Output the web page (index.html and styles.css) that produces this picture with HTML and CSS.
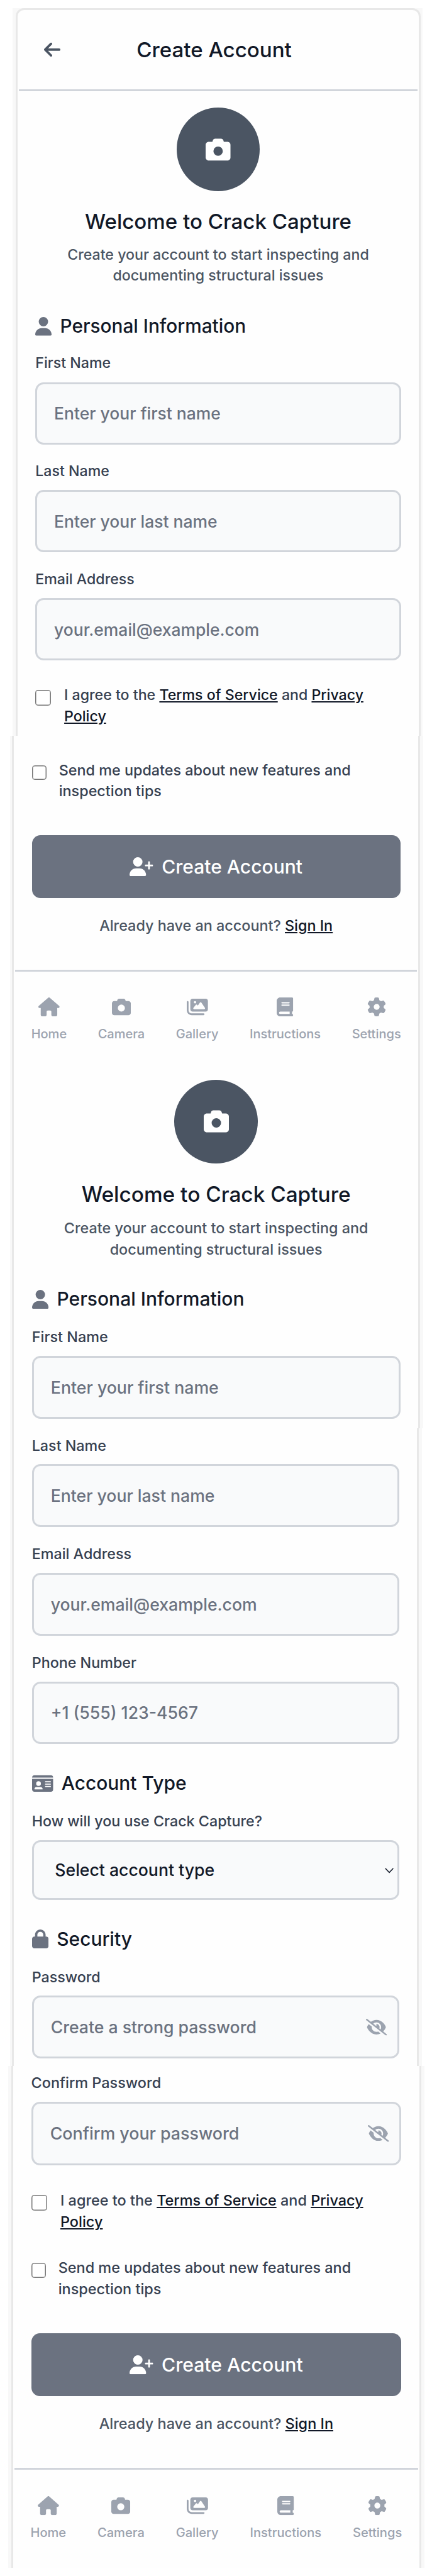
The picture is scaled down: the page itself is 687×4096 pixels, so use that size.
FILE: index.html
```html
<!DOCTYPE html>
<html lang="en">
<head>
<meta charset="utf-8">
<title>Create Account</title>
<link rel="stylesheet" href="styles.css">
</head>
<body>
<svg class="sprite" aria-hidden="true">
  <symbol id="arrow" viewBox="0 0 448 512"><path d="M9.4 233.4c-12.5 12.5-12.5 32.8 0 45.3l160 160c12.5 12.5 32.8 12.5 45.3 0s12.5-32.8 0-45.3L109.2 288 416 288c17.7 0 32-14.3 32-32s-14.3-32-32-32l-306.7 0L214.6 118.6c12.5-12.5 12.5-32.8 0-45.3s-32.8-12.5-45.3 0l-160 160z"/></symbol>
  <symbol id="camera" viewBox="0 0 512 512"><path d="M149.1 64.8L138.7 96H64C28.7 96 0 124.7 0 160V416c0 35.3 28.7 64 64 64H448c35.3 0 64-28.7 64-64V160c0-35.3-28.7-64-64-64H373.3L362.9 64.8C356.4 45.2 338.1 32 317.4 32H194.6c-20.7 0-39 13.2-45.5 32.8zM256 192a96 96 0 1 1 0 192 96 96 0 1 1 0-192z"/></symbol>
  <symbol id="user" viewBox="0 0 448 512"><path d="M224 256A128 128 0 1 0 224 0a128 128 0 1 0 0 256zm-45.7 48C79.8 304 0 383.8 0 482.3C0 498.7 13.3 512 29.7 512H418.3c16.4 0 29.7-13.3 29.7-29.7C448 383.8 368.2 304 269.7 304H178.3z"/></symbol>
  <symbol id="user-plus" viewBox="0 0 640 512"><path d="M96 128a128 128 0 1 1 256 0A128 128 0 1 1 96 128zM0 482.3C0 383.8 79.8 304 178.3 304h91.4C368.2 304 448 383.8 448 482.3c0 16.4-13.3 29.7-29.7 29.7H29.7C13.3 512 0 498.7 0 482.3zM504 312V248H440c-13.3 0-24-10.7-24-24s10.7-24 24-24h64V136c0-13.3 10.7-24 24-24s24 10.7 24 24v64h64c13.3 0 24 10.7 24 24s-10.7 24-24 24H552v64c0 13.3-10.7 24-24 24s-24-10.7-24-24z"/></symbol>
  <symbol id="home" viewBox="0 0 576 512"><path d="M575.8 255.5c0 18-15 32.1-32 32.1h-32l.7 160.2c0 2.7-.2 5.4-.5 8.1V472c0 22.1-17.9 40-40 40H456c-1.1 0-2.2 0-3.3-.1c-1.4 .1-2.8 .1-4.2 .1H416 392c-22.1 0-40-17.9-40-40V448 384c0-17.7-14.3-32-32-32H256c-17.7 0-32 14.3-32 32v64 24c0 22.1-17.9 40-40 40H160 128.1c-1.5 0-3-.1-4.5-.2c-1.2 .1-2.4 .2-3.6 .2H104c-22.1 0-40-17.9-40-40V360c0-.9 0-1.9 .1-2.8V287.6H32c-18 0-32-14-32-32.1c0-9 3-17 10-24L266.4 8c7-7 15-8 22-8s15 2 21 7L564.8 231.5c8 7 12 15 11 24z"/></symbol>
  <symbol id="images" viewBox="0 0 576 512"><path d="M160 32c-35.3 0-64 28.7-64 64V320c0 35.3 28.7 64 64 64H512c35.3 0 64-28.7 64-64V96c0-35.3-28.7-64-64-64H160zM396 138.7l96 144c4.9 7.4 5.4 16.8 1.2 24.6S480.9 320 472 320H328 280 200c-9.2 0-17.6-5.3-21.6-13.6s-2.9-18.2 2.9-25.4l64-80c4.6-5.7 11.4-9 18.7-9s14.2 3.3 18.7 9l17.3 21.6 56-84C360.5 132 368 128 376 128s15.5 4 20 10.7zM192 128a32 32 0 1 1 64 0 32 32 0 1 1 -64 0zM48 120c0-13.3-10.7-24-24-24S0 106.7 0 120V344c0 75.1 60.9 136 136 136H456c13.3 0 24-10.7 24-24s-10.7-24-24-24H136c-48.6 0-88-39.4-88-88V120z"/></symbol>
  <symbol id="book" viewBox="0 0 448 512"><path d="M96 0C43 0 0 43 0 96V416c0 53 43 96 96 96H384h32c17.7 0 32-14.3 32-32s-14.3-32-32-32V384c17.7 0 32-14.3 32-32V32c0-17.7-14.3-32-32-32H384 96zm0 384H352v64H96c-17.7 0-32-14.3-32-32s14.3-32 32-32zm32-240c0-8.8 7.2-16 16-16H336c8.8 0 16 7.2 16 16s-7.2 16-16 16H144c-8.8 0-16-7.2-16-16zm16 48H336c8.8 0 16 7.2 16 16s-7.2 16-16 16H144c-8.8 0-16-7.2-16-16s7.2-16 16-16z"/></symbol>
  <symbol id="gear" viewBox="0 0 512 512"><path d="M495.9 166.6c3.2 8.7 .5 18.4-6.4 24.6l-43.3 39.4c1.1 8.3 1.7 16.8 1.7 25.4s-.6 17.1-1.7 25.4l43.3 39.4c6.9 6.2 9.6 15.9 6.4 24.6c-4.4 11.9-9.7 23.3-15.8 34.3l-4.7 8.1c-6.6 11-14 21.4-22.1 31.2c-5.9 7.2-15.7 9.6-24.5 6.8l-55.7-17.7c-13.4 10.3-28.2 18.9-44 25.4l-12.5 57.1c-2 9.1-9 16.3-18.2 17.8c-13.8 2.3-28 3.5-42.5 3.5s-28.7-1.2-42.5-3.5c-9.2-1.5-16.2-8.7-18.2-17.8l-12.5-57.1c-15.8-6.5-30.6-15.1-44-25.4L83.1 425.9c-8.8 2.8-18.6 .3-24.5-6.8c-8.1-9.8-15.5-20.2-22.1-31.2l-4.7-8.1c-6.1-11-11.4-22.4-15.8-34.3c-3.2-8.7-.5-18.4 6.4-24.6l43.3-39.4C64.6 273.1 64 264.6 64 256s.6-17.1 1.7-25.4L22.4 191.2c-6.9-6.2-9.6-15.9-6.4-24.6c4.4-11.9 9.7-23.3 15.8-34.3l4.7-8.1c6.6-11 14-21.4 22.1-31.2c5.9-7.2 15.7-9.6 24.5-6.8l55.7 17.7c13.4-10.3 28.2-18.9 44-25.4l12.5-57.1c2-9.1 9-16.3 18.2-17.8C227.3 1.2 241.5 0 256 0s28.7 1.2 42.5 3.5c9.2 1.5 16.2 8.7 18.2 17.8l12.5 57.1c15.8 6.5 30.6 15.1 44 25.4l55.7-17.7c8.8-2.8 18.6-.3 24.5 6.8c8.1 9.8 15.5 20.2 22.1 31.2l4.7 8.1c6.1 11 11.4 22.4 15.8 34.3zM256 336a80 80 0 1 0 0-160 80 80 0 1 0 0 160z"/></symbol>
  <symbol id="id-card" viewBox="0 0 576 512"><path d="M0 96l576 0c0-35.3-28.7-64-64-64H64C28.7 32 0 60.7 0 96zm0 32V416c0 35.3 28.7 64 64 64H512c35.3 0 64-28.7 64-64V128H0zM64 405.3c0-29.5 23.9-53.3 53.3-53.3H234.7c29.5 0 53.3 23.9 53.3 53.3c0 5.9-4.8 10.7-10.7 10.7H74.7c-5.9 0-10.7-4.8-10.7-10.7zM176 192a64 64 0 1 1 0 128 64 64 0 1 1 0-128zm176 16c0-8.8 7.2-16 16-16H496c8.8 0 16 7.2 16 16s-7.2 16-16 16H368c-8.8 0-16-7.2-16-16zm0 64c0-8.8 7.2-16 16-16H496c8.8 0 16 7.2 16 16s-7.2 16-16 16H368c-8.8 0-16-7.2-16-16zm0 64c0-8.8 7.2-16 16-16H496c8.8 0 16 7.2 16 16s-7.2 16-16 16H368c-8.8 0-16-7.2-16-16z"/></symbol>
  <symbol id="lock" viewBox="0 0 448 512"><path d="M144 144v48H304V144c0-44.2-35.8-80-80-80s-80 35.8-80 80zM80 192V144C80 64.5 144.5 0 224 0s144 64.5 144 144v48h16c35.3 0 64 28.7 64 64V448c0 35.3-28.7 64-64 64H64c-35.3 0-64-28.7-64-64V256c0-35.3 28.7-64 64-64H80z"/></symbol>
  <symbol id="eye-slash" viewBox="0 0 640 512"><path d="M38.8 5.1C28.4-3.1 13.3-1.2 5.1 9.2S-1.2 34.7 9.2 42.9l592 464c10.4 8.2 25.5 6.3 33.7-4.1s6.3-25.5-4.1-33.7L525.6 386.7c39.6-40.6 66.4-86.1 79.9-118.4c3.3-7.9 3.3-16.7 0-24.6c-14.9-35.7-46.2-87.7-93-131.1C465.5 68.8 400.8 32 320 32c-68.2 0-125 26.3-169.3 60.8L38.8 5.1zM223.1 149.5C248.6 126.2 282.7 112 320 112c79.5 0 144 64.5 144 144c0 24.9-6.3 48.3-17.4 68.7L408 294.5c8.4-19.3 10.6-41.4 4.8-63.3c-11.1-41.5-47.8-69.4-88.6-71.1c-5.8-.2-9.2 6.1-7.4 11.7c2.1 6.4 3.3 13.2 3.3 20.3c0 10.2-2.4 19.8-6.6 28.3l-90.3-70.8zM373 389.9c-16.4 6.5-34.3 10.1-53 10.1c-79.5 0-144-64.5-144-144c0-6.9 .5-13.6 1.4-20.2L83.1 161.5C60.3 191.2 44 220.9 34.5 243.7c-3.3 7.9-3.3 16.7 0 24.6c14.9 35.7 46.2 87.7 93 131.1C174.5 443.2 239.2 480 320 480c47.8 0 89.9-12.9 126.2-32.5L373 389.9z"/></symbol>
</svg>

<main class="page">
  <div class="panel panel-top">
    <div class="screen">
      <header class="header">
        <svg class="back"><use href="#arrow"/></svg>
        <h1 class="title">Create Account</h1>
      </header>
      <section class="intro">
        <div class="badge"><svg><use href="#camera"/></svg></div>
        <h2 class="welcome">Welcome to Crack Capture</h2>
        <p class="lead">Create your account to start inspecting and<br>documenting structural issues</p>
      </section>
      <div class="content">
        <h3 class="group"><svg class="w448"><use href="#user"/></svg>Personal Information</h3>
        <label class="label">First Name</label>
        <input class="input" type="text" placeholder="Enter your first name">
        <label class="label next">Last Name</label>
        <input class="input" type="text" placeholder="Enter your last name">
        <label class="label next">Email Address</label>
        <input class="input" type="email" placeholder="your.email@example.com">
        <div class="check terms">
          <input class="box" type="checkbox">
          <span>I agree to the <a>Terms of Service</a> and <a>Privacy<br>Policy</a></span>
        </div>
      </div>
    </div>
  </div>

  <div class="panel panel-second">
    <div class="screen">
      <div class="content">
        <div class="check updates first">
          <input class="box" type="checkbox">
          <span>Send me updates about new features and<br>inspection tips</span>
        </div>
        <button class="submit"><svg><use href="#user-plus"/></svg>Create Account</button>
        <p class="signin">Already have an account? <a>Sign In</a></p>
      </div>
      <nav class="nav">
        <div class="tab"><svg class="w576"><use href="#home"/></svg>Home</div>
        <div class="tab"><svg class="w512"><use href="#camera"/></svg>Camera</div>
        <div class="tab"><svg class="w576"><use href="#images"/></svg>Gallery</div>
        <div class="tab"><svg class="w448"><use href="#book"/></svg>Instructions</div>
        <div class="tab"><svg class="w512"><use href="#gear"/></svg>Settings</div>
      </nav>
      <section class="intro">
        <div class="badge"><svg><use href="#camera"/></svg></div>
        <h2 class="welcome">Welcome to Crack Capture</h2>
        <p class="lead">Create your account to start inspecting and<br>documenting structural issues</p>
      </section>
      <div class="content">
        <h3 class="group"><svg class="w448"><use href="#user"/></svg>Personal Information</h3>
        <label class="label">First Name</label>
        <input class="input" type="text" placeholder="Enter your first name">
      </div>
    </div>
  </div>

  <div class="panel panel-third">
    <div class="screen">
      <div class="content">
        <label class="label">Last Name</label>
        <input class="input" type="text" placeholder="Enter your last name">
        <label class="label next">Email Address</label>
        <input class="input" type="email" placeholder="your.email@example.com">
        <label class="label next">Phone Number</label>
        <input class="input" type="tel" placeholder="+1 (555) 123-4567">
        <h3 class="group"><svg class="w576"><use href="#id-card"/></svg>Account Type</h3>
        <label class="label">How will you use Crack Capture?</label>
        <div class="field">
          <select class="input select"><option>Select account type</option></select>
          <svg class="chevron" viewBox="0 0 14.2 8.4"><path d="M.8 .8L7.1 7.4L13.4 .8"/></svg>
        </div>
        <h3 class="group"><svg class="w448"><use href="#lock"/></svg>Security</h3>
        <label class="label">Password</label>
        <div class="field">
          <input class="input" type="password" placeholder="Create a strong password">
          <svg class="eye"><use href="#eye-slash"/></svg>
        </div>
      </div>
    </div>
  </div>

  <div class="panel panel-last">
    <div class="screen">
      <div class="content">
        <label class="label">Confirm Password</label>
        <div class="field">
          <input class="input" type="password" placeholder="Confirm your password">
          <svg class="eye"><use href="#eye-slash"/></svg>
        </div>
        <div class="check terms">
          <input class="box" type="checkbox">
          <span>I agree to the <a>Terms of Service</a> and <a>Privacy<br>Policy</a></span>
        </div>
        <div class="check updates">
          <input class="box" type="checkbox">
          <span>Send me updates about new features and<br>inspection tips</span>
        </div>
        <button class="submit"><svg><use href="#user-plus"/></svg>Create Account</button>
        <p class="signin">Already have an account? <a>Sign In</a></p>
      </div>
      <nav class="nav">
        <div class="tab"><svg class="w576"><use href="#home"/></svg>Home</div>
        <div class="tab"><svg class="w512"><use href="#camera"/></svg>Camera</div>
        <div class="tab"><svg class="w576"><use href="#images"/></svg>Gallery</div>
        <div class="tab"><svg class="w448"><use href="#book"/></svg>Instructions</div>
        <div class="tab"><svg class="w512"><use href="#gear"/></svg>Settings</div>
      </nav>
    </div>
  </div>
</main>
</body>
</html>
```
FILE: styles.css
```css
* { box-sizing: border-box; margin: 0; padding: 0; }
body { background: #fff; font-family: Inter, "Liberation Sans", sans-serif; font-weight: 500; color: #111827; }
svg { display: block; fill: currentColor; flex: none; overflow: visible; }
.sprite { position: absolute; width: 0; height: 0; }
.page { height: 4096px; padding-top: 13px; overflow: hidden; }

/* each panel carries its own unit, --u */
.panel { background: #f8f8f8; overflow: hidden; }
.screen { height: 100%; background: #fefefe; border: solid #e8e8e8; border-width: 0 3px; }
.panel-top { --u: 1.655px; height: 1157px; margin-left: 20px; width: 652px; padding: 0 3px 0 5px; }
.panel-top .screen { border-top-width: 3px; border-radius: 13px 13px 0 0; padding: 0 1.8px; }
.panel-second { --u: 1.669px; height: 1100.5px; margin-left: 16px; width: 657px; padding: 0 5px 0 3.3px; }
.panel-third { --u: 1.664px; height: 1014.5px; margin-left: 16px; width: 655px; padding: 0 4.6px 0 3.3px; }
.panel-last { --u: 1.675px; height: 798px; margin-left: 13px; width: 661.7px; padding: 0 5px; }
.panel-second .screen, .panel-third .screen, .panel-last .screen { padding: 0 1.8px; }

.header { height: 129px; border-bottom: 3px solid #d1d5db; display: flex; align-items: center; color: #4b5563; padding: 0 79px 0 40px; }
.back { width: calc(15.75 * var(--u)); height: calc(18 * var(--u)); }
.title { flex: 1; text-align: center; font-size: calc(20 * var(--u)); line-height: calc(28 * var(--u)); font-weight: 500; color: #111827; }

.intro { display: flex; flex-direction: column; align-items: center; text-align: center; padding-top: 26.4px; }
.panel-second .intro { padding-top: 59px; }
.badge { width: calc(80 * var(--u)); height: calc(80 * var(--u)); border-radius: 50%; background: #4b5563; color: #fff; display: grid; place-items: center; }
.badge svg { width: calc(24 * var(--u)); height: calc(24 * var(--u)); }
.welcome { margin-top: calc(15.5 * var(--u)); font-size: calc(20 * var(--u)); line-height: calc(28 * var(--u)); font-weight: 500; }
.lead { margin-top: calc(8 * var(--u)); font-size: calc(14 * var(--u)); line-height: calc(20 * var(--u)); color: #4b5563; }
.panel-top .lead { margin-bottom: 1px; }

.content { padding: 0 calc(16 * var(--u)); display: flex; flex-direction: column; }
.group { margin-top: calc(23.6 * var(--u)); margin-bottom: calc(12 * var(--u)); display: flex; align-items: center; gap: calc(8 * var(--u)); font-size: calc(18 * var(--u)); line-height: calc(28 * var(--u)); font-weight: 500; }
.group svg { color: #6b7280; height: calc(18 * var(--u)); }
.w448 { width: calc(15.75 * var(--u)); }
.w512 { width: calc(18 * var(--u)); }
.w576 { width: calc(20.25 * var(--u)); }
.label { font-size: calc(14 * var(--u)); line-height: calc(20 * var(--u)); color: #374151; margin-bottom: calc(8 * var(--u)); }
.next { margin-top: calc(15.8 * var(--u)); }
.panel-third .content { padding-top: 11.4px; }
.panel-last .content { padding-top: 10.3px; }
.input { display: block; width: 100%; height: calc(59.9 * var(--u)); border: calc(2 * var(--u)) solid #d1d5db; border-radius: calc(8 * var(--u)); background: #f9fafb; padding: 0 calc(16.2 * var(--u)); font: 500 calc(16 * var(--u)) Inter, "Liberation Sans", sans-serif; color: #111827; outline: none; }
.input::placeholder { color: #6b7280; opacity: 1; }
.field { display: grid; align-items: center; }
.field > * { grid-area: 1 / 1; }
.select { appearance: none; height: calc(57.2 * var(--u)); padding-left: calc(20.2 * var(--u)); }
.chevron { justify-self: end; width: 14.2px; height: 8.4px; margin: 1.5px 8.7px 0 0; fill: none; stroke: #111827; stroke-width: 1.5; }
.eye { justify-self: end; width: calc(20 * var(--u)); height: calc(16 * var(--u)); margin-right: calc(12 * var(--u)); color: #9ca3af; }

.check { display: flex; align-items: flex-start; gap: calc(12.7 * var(--u)); margin-top: calc(23.8 * var(--u)); font-size: calc(14 * var(--u)); line-height: calc(20 * var(--u)); color: #374151; white-space: nowrap; }
.updates { gap: calc(11.7 * var(--u)); }
.first { margin-top: 37.8px; }
.box { appearance: none; flex: none; width: calc(15 * var(--u)); height: calc(15 * var(--u)); margin-top: calc(4.7 * var(--u)); border: 1px solid #767676; border-radius: calc(2.5 * var(--u)); background: #fff; box-shadow: inset 0 0 0 0.5px #767676; }
.updates .box { width: calc(14 * var(--u)); height: calc(14 * var(--u)); margin-top: calc(5.3 * var(--u)); }
a { color: #111827; text-decoration: underline; }

.submit { height: calc(60 * var(--u)); margin-top: calc(32 * var(--u)); border: 0; border-radius: calc(8 * var(--u)); background: #6b7280; color: #fff; display: flex; align-items: center; justify-content: center; gap: calc(8 * var(--u)); font: 500 calc(18 * var(--u)) Inter, "Liberation Sans", sans-serif; }
.submit svg { width: calc(22.5 * var(--u)); height: calc(18 * var(--u)); }
.signin { margin-top: calc(16 * var(--u)); text-align: center; font-size: calc(14 * var(--u)); line-height: calc(20 * var(--u)); color: #4b5563; }

.nav { margin-top: calc(32 * var(--u)); border-top: calc(2 * var(--u)) solid #d1d5db; padding: calc(20 * var(--u)) calc(15.3 * var(--u)) 0; display: flex; justify-content: space-between; }
.tab { display: flex; flex-direction: column; align-items: center; font-size: calc(12 * var(--u)); line-height: calc(16 * var(--u)); color: #9ca3af; }
.tab svg { height: calc(18 * var(--u)); margin: calc(5 * var(--u)) 0 calc(8.8 * var(--u)); }
```
